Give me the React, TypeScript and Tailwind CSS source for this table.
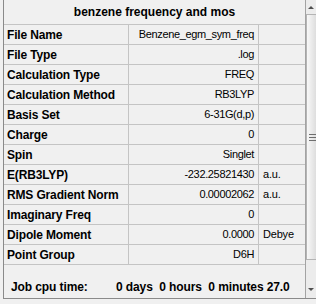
const ROWS: { label: string; value: string; unit?: string }[] = [
  { label: 'File Name', value: 'Benzene_egm_sym_freq' },
  { label: 'File Type', value: '.log' },
  { label: 'Calculation Type', value: 'FREQ' },
  { label: 'Calculation Method', value: 'RB3LYP' },
  { label: 'Basis Set', value: '6-31G(d,p)' },
  { label: 'Charge', value: '0' },
  { label: 'Spin', value: 'Singlet' },
  { label: 'E(RB3LYP)', value: '-232.25821430', unit: 'a.u.' },
  { label: 'RMS Gradient Norm', value: '0.00002062', unit: 'a.u.' },
  { label: 'Imaginary Freq', value: '0' },
  { label: 'Dipole Moment', value: '0.0000', unit: 'Debye' },
  { label: 'Point Group', value: 'D6H' },
];

function ScrollBar() {
  return (
    <div className="flex h-full w-[11px] shrink-0 flex-col border-l border-[#a3a3a3] bg-[#ececec]">
      <div className="flex h-[14px] items-center justify-end pr-[2px]">
        <div className="h-0 w-0 border-x-[3px] border-b-[3px] border-x-transparent border-b-[#505050]" />
      </div>
      <div className="relative h-[246px] border-l border-t border-b border-[#b4b4b4] bg-gradient-to-r from-[#f8f8f8] to-[#dedede]">
        {/* grip */}
        <div className="absolute left-[2px] top-[119px] flex flex-col gap-[2px]">
          <div className="h-px w-[8px] bg-[#6e6e6e]" />
          <div className="h-px w-[8px] bg-[#6e6e6e]" />
          <div className="h-px w-[8px] bg-[#6e6e6e]" />
        </div>
      </div>
      <div className="flex-1" />
      <div className="flex h-[18px] items-center justify-end pr-[2px]">
        <div className="h-0 w-0 border-x-[3px] border-t-[3px] border-x-transparent border-t-[#505050]" />
      </div>
    </div>
  );
}

export default function App() {
  return (
    <div
      className="h-[304px] w-[316px] overflow-hidden bg-[#f0f0f0] pl-[3px] text-black"
      style={{ fontFamily: '"Liberation Sans", Arial, sans-serif' }}
    >
      <div className="flex h-[299px] overflow-hidden border-b border-l border-[#8a8a8a]">
        <div className="w-[301px] shrink-0 overflow-hidden">
          <div className="flex h-[25px] items-center justify-center border-b border-[#c4c4c4] text-[12px] font-bold">
            benzene frequency and mos
          </div>
          {ROWS.map((r) => (
            <div key={r.label} className="flex h-[20px] border-b border-[#c4c4c4]">
              <div className="flex w-[125px] shrink-0 items-center border-r border-[#c4c4c4] pl-[3px] text-[12px] font-bold tracking-[-0.15px]">
                {r.label}
              </div>
              <div className="flex w-[130px] shrink-0 items-center justify-end border-r border-[#c4c4c4] pr-[4px] text-[11px] tracking-[-0.35px]">
                {r.value}
              </div>
              <div className="flex flex-1 items-center pl-[4px] text-[11px] tracking-[-0.2px]">
                {r.unit}
              </div>
            </div>
          ))}
          {/* footer line runs past the panel bottom, so "seconds" is clipped */}
          <div className="flex pt-[14px] text-[12px] font-bold leading-[16px] tracking-[-0.1px]">
            <div className="w-[112px] shrink-0 pl-[7px]">Job cpu time:</div>
            <div className="whitespace-nowrap">
              <div>0 days&nbsp;&nbsp;0 hours&nbsp;&nbsp;0 minutes 27.0</div>
              <div className="pl-[14px]">seconds</div>
            </div>
          </div>
        </div>
        <ScrollBar />
      </div>
    </div>
  );
}
